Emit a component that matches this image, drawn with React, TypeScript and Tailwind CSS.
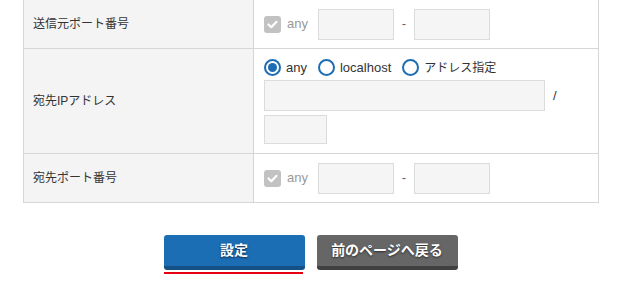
import React from "react";

const font = { fontFamily: '"Liberation Sans", "Noto Sans CJK JP", sans-serif' };

function Check() {
  return (
    <span className="w-[17px] h-[17px] rounded-[3px] bg-[#c2c2c2] flex items-center justify-center shrink-0">
      <svg width="11" height="9" viewBox="0 0 11 9">
        <path d="M1.5 4.5 L4.3 7.2 L9.5 1.8" fill="none" stroke="#fff" strokeWidth="2.2" strokeLinecap="round" strokeLinejoin="round" />
      </svg>
    </span>
  );
}

function Radio({ on, label, jp }: { on?: boolean; label: string; jp?: boolean }) {
  return (
    <label className={"flex items-center gap-[5px] text-[#333] " + (jp ? "text-[12px]" : "text-[13px]")}>
      <span className="w-[17px] h-[17px] rounded-full border-2 border-[#1d6db4] bg-white flex items-center justify-center shrink-0">
        {on && <span className="w-[9px] h-[9px] rounded-full bg-[#1d6db4]" />}
      </span>
      {label}
    </label>
  );
}

function Box({ w, h = 31 }: { w: number; h?: number }) {
  return (
    <input
      className="bg-[#f5f5f5] border border-[#dcdcdc] outline-none"
      style={{ width: w, height: h }}
    />
  );
}

function PortRange() {
  return (
    <div className="flex items-center h-full">
      <Check />
      <span className="ml-[6px] text-[13px] text-[#999] w-[31px]">any</span>
      <Box w={76} />
      <span className="w-[20px] text-center text-[13px] text-[#666]">-</span>
      <Box w={76} />
    </div>
  );
}

export default function App() {
  return (
    <div className="w-[621px] h-[283px] bg-white overflow-hidden text-[#333]" style={font}>
      <div className="ml-[23px] w-[576px] border-l border-r border-[#d6d6d6]">
        <div className="flex border-b border-[#d6d6d6] h-[49px]">
          <div className="w-[230px] bg-[#f4f4f4] border-r border-[#d6d6d6] px-[9px] flex items-center text-[12px]">
            送信元ポート番号
          </div>
          <div className="flex-1 pl-[10px]">
            <PortRange />
          </div>
        </div>
        <div className="flex border-b border-[#d6d6d6] h-[105px]">
          <div className="w-[230px] bg-[#f4f4f4] border-r border-[#d6d6d6] px-[9px] flex items-center text-[12px]">
            宛先IPアドレス
          </div>
          <div className="flex-1 pl-[10px] pt-[10px]">
            <div className="flex items-center gap-[11px] h-[17px]">
              <Radio on label="any" />
              <Radio label="localhost" />
              <Radio jp label="アドレス指定" />
            </div>
            <div className="flex items-center mt-[4px]">
              <Box w={281} />
              <span className="ml-[8px] text-[13px]">/</span>
            </div>
            <div className="mt-[4px]">
              <Box w={63} h={29} />
            </div>
          </div>
        </div>
        <div className="flex border-b border-[#d6d6d6] h-[49px]">
          <div className="w-[230px] bg-[#f4f4f4] border-r border-[#d6d6d6] px-[9px] flex items-center text-[12px]">
            宛先ポート番号
          </div>
          <div className="flex-1 pl-[10px]">
            <PortRange />
          </div>
        </div>
      </div>
      <div className="flex justify-center gap-[12px] mt-[32px]">
        <div className="flex flex-col items-start">
          <button className="w-[141px] h-[35px] rounded-[3px] bg-[#1b6db4] border-b-[4px] border-[#135186] text-white text-[14px] font-bold [text-shadow:0_1px_2px_rgba(0,0,0,0.6)]">
            設定
          </button>
          <div className="mt-[2px] w-[139px] h-[2px] bg-[#e60012]" />
        </div>
        <button className="w-[141px] h-[35px] rounded-[3px] bg-[#666666] border-b-[4px] border-[#404040] text-white text-[14px] font-bold [text-shadow:0_1px_2px_rgba(0,0,0,0.6)]">
          前のページへ戻る
        </button>
      </div>
    </div>
  );
}
